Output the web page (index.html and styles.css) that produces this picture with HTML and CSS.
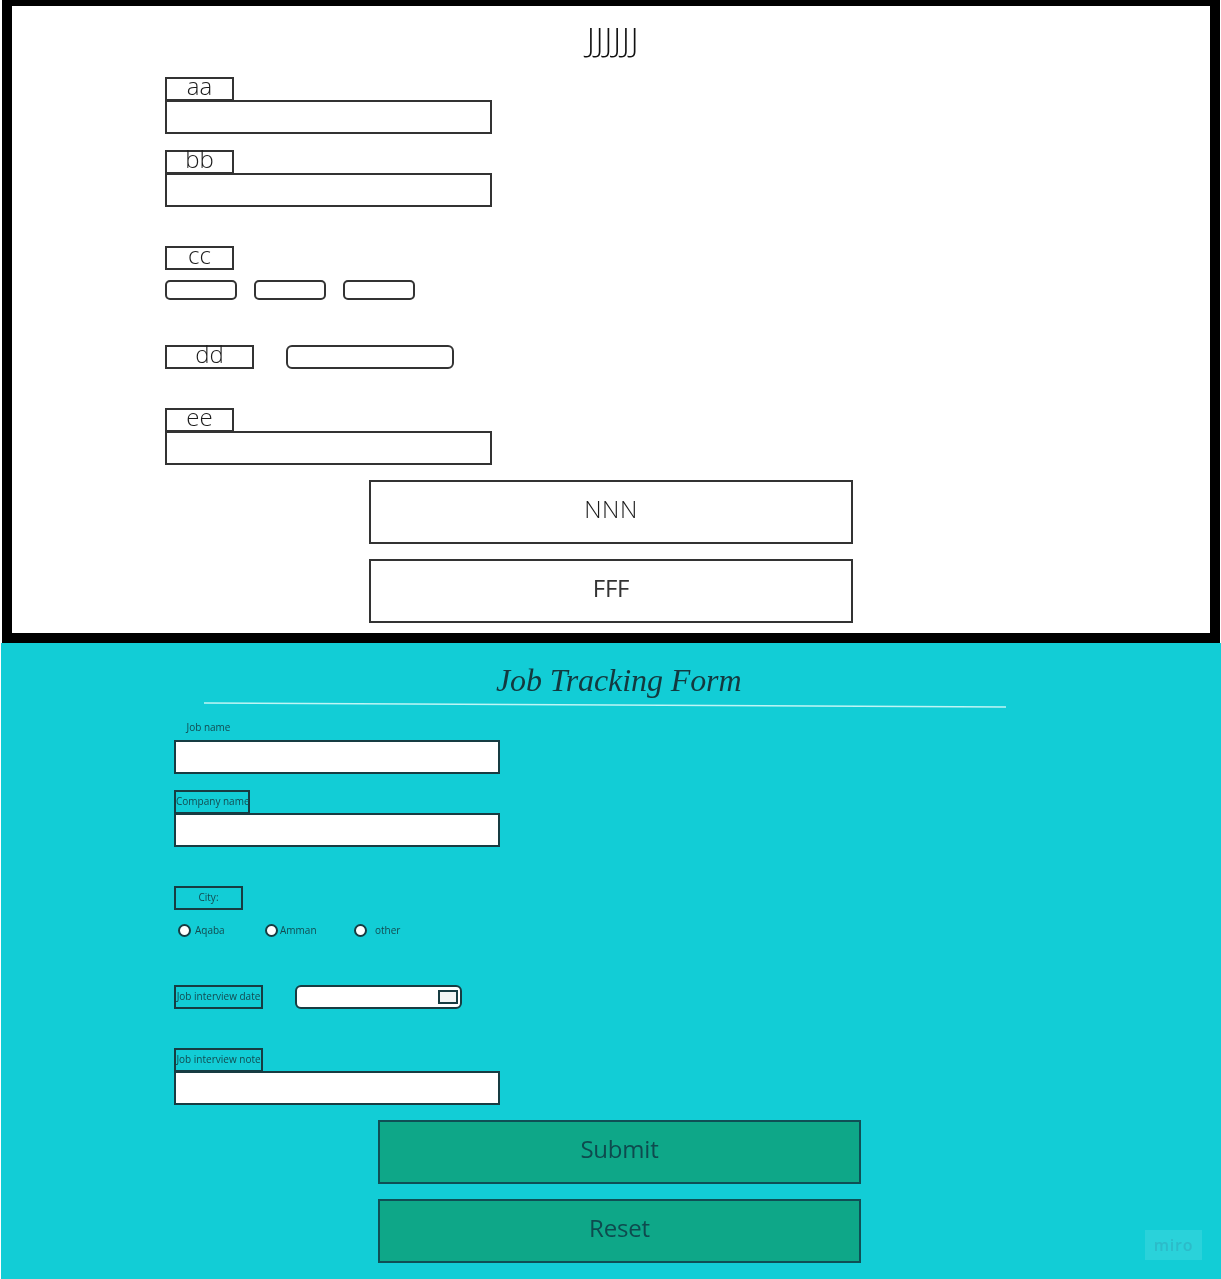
FILE: index.html
```html
<!DOCTYPE html>
<html lang="en">
<head>
<meta charset="utf-8">
<title>Job Tracking Form</title>
<link rel="stylesheet" href="styles.css">
</head>
<body>
<main class="board">
  <section class="panel wire">
    <h1 class="sketch-title">JJJJJJ</h1>
    <div class="fields">
      <div class="field">
        <div class="tag">aa</div>
        <div class="input"></div>
      </div>
      <div class="field">
        <div class="tag">bb</div>
        <div class="input"></div>
      </div>
      <div class="field field-city">
        <div class="tag">cc</div>
        <div class="options">
          <div class="pill"></div>
          <div class="pill"></div>
          <div class="pill"></div>
        </div>
      </div>
      <div class="field field-date">
        <div class="tag tag-wide">dd</div>
        <div class="date"></div>
      </div>
      <div class="field field-note">
        <div class="tag">ee</div>
        <div class="input"></div>
      </div>
    </div>
    <div class="actions">
      <div class="action">NNN</div>
      <div class="action action-dark">FFF</div>
    </div>
  </section>

  <section class="panel final">
    <h2 class="form-title">Job Tracking Form</h2>
    <svg class="rule" width="810" height="6" viewBox="0 0 810 6"><line x1="4" y1="1" x2="806" y2="5"/></svg>
    <div class="fields">
      <div class="field">
        <div class="tag tag-plain small">Job name</div>
        <div class="input"></div>
      </div>
      <div class="field">
        <div class="tag tag-company small">Company name</div>
        <div class="input"></div>
      </div>
      <div class="field field-city">
        <div class="tag small">City:</div>
        <div class="radios">
          <label class="radio radio-a small"><span class="dot"></span>Aqaba</label>
          <label class="radio radio-b small"><span class="dot"></span>Amman</label>
          <label class="radio radio-c small"><span class="dot"></span>other</label>
        </div>
      </div>
      <div class="field field-date">
        <div class="tag tag-wide small">Job interview date</div>
        <div class="date"><span class="date-btn"></span></div>
      </div>
      <div class="field field-note">
        <div class="tag tag-wide small">Job interview note</div>
        <div class="input"></div>
      </div>
    </div>
    <div class="actions">
      <div class="action">Submit</div>
      <div class="action">Reset</div>
    </div>
    <div class="badge">miro</div>
  </section>
</main>
</body>
</html>
```
FILE: styles.css
```css
* { box-sizing: border-box; }
html, body { margin: 0; padding: 0; background: #fff; }
body { font-family: "Open Sans", "Liberation Sans", sans-serif; width: 1221px; height: 1279px; overflow: hidden; }
.board { display: flex; flex-direction: column; width: 1221px; will-change: transform; }

.panel { position: relative; display: flex; flex-direction: column; }
.wire {
  margin-left: 2px; width: 1218px; height: 643px;
  border: solid #000; border-width: 6px 10px 10px 10px;
  --ink: #333; --fill: #fff; color: #1c1c1c;
  font-weight: 300;
  padding-left: 153px;
}
.final {
  width: 1221px; height: 636px; margin-left: 1px;
  background: #12cdd6; color: #134a50;
  --ink: #173c42; --fill: #fff;
  padding-left: 173px;
}

.sketch-title {
  margin: 16px 0 0 0; height: 55px; line-height: 36px;
  font-size: 33px; font-weight: 300; letter-spacing: .6px;
  text-align: center; color: #111;
  width: 896px;
}

.form-title {
  margin: 18px 0 0 322px; height: 42px; line-height: 38px;
  font-family: "Liberation Serif", serif; font-style: italic; font-weight: 400;
  font-size: 32px; letter-spacing: -.1px; color: #13393f; white-space: nowrap;
}
.rule { display: block; margin: -1px 0 0 26px; height: 6px; }
.rule line { stroke: #bff5f5; stroke-width: 1.4; }

.fields { display: flex; flex-direction: column; width: 327px; }
.final .fields { margin-top: 9px; width: 326px; }
.field { display: flex; flex-direction: column; margin-bottom: 16px; }
.field-city { margin-top: 23px; margin-bottom: 0; }
.field-date { flex-direction: row; margin-top: 45px; margin-bottom: 0; }
.field-note { margin-top: 39px; margin-bottom: 0; }

.tag {
  width: 69px; height: 24px; border: 2px solid var(--ink); flex: none;
  font-size: 24px; line-height: 14px; text-align: center; white-space: nowrap;
}
.tag-wide { width: 89px; }
.tag.small { font-size: 10px; line-height: 18px; font-weight: 400; overflow: visible; }
.tag-plain { border-color: transparent; }
.tag.tag-plain { line-height: 17px; }
.tag-company { width: 76px; }

.input {
  width: 100%; height: 34px; margin-top: -1px;
  border: 2px solid var(--ink); background: var(--fill);
}

.options { display: flex; gap: 17px; margin-top: 10px; height: 20px; }
.pill {
  width: 72px; height: 20px; border: 2px solid var(--ink);
  border-radius: 5px; background: var(--fill);
}

.date {
  position: relative;
  width: 168px; height: 24px; margin-left: 32px;
  border: 2px solid var(--ink); border-radius: 6px; background: var(--fill);
}
.final .date { width: 167px; }
.date-btn {
  position: absolute; right: 2px; top: 3px; width: 20px; height: 14px;
  border: 2px solid var(--ink); background: #f2f5f5;
}

.radios { display: flex; height: 20px; margin-top: 10px; align-items: center; }
.radio { display: flex; align-items: center; font-size: 10px; white-space: nowrap; }
.dot {
  width: 13px; height: 13px; border: 2px solid var(--ink); border-radius: 50%;
  background: var(--fill); flex: none;
}
.radio-a { width: 91px; padding-left: 4px; gap: 4px; }
.radio-b { width: 89px; gap: 2px; }
.radio-c { gap: 8px; }

.actions { display: flex; flex-direction: column; gap: 15px; width: 484px; margin-left: 204px; margin-top: 15px; }
.final .actions { width: 483px; }
.action {
  height: 64px; border: 2px solid var(--ink);
  display: flex; justify-content: center; padding-top: 9px;
  font-size: 24px; line-height: 36px; letter-spacing: .6px;
}
.action-dark { color: #333; font-weight: 400; letter-spacing: -.3px; }
.final .action { background: #0ea788; border-color: #0f4f55; color: #0e4a4e; font-weight: 400; letter-spacing: -.2px; }
.wire .action { background: #fff; }

.badge {
  position: absolute; right: 20px; bottom: 19px; width: 57px; height: 30px;
  background: rgba(255,255,255,.1);
  color: rgba(50,120,150,.25); font-size: 16px; font-weight: 600; text-align: center; line-height: 30px; letter-spacing: .8px;
}
```
